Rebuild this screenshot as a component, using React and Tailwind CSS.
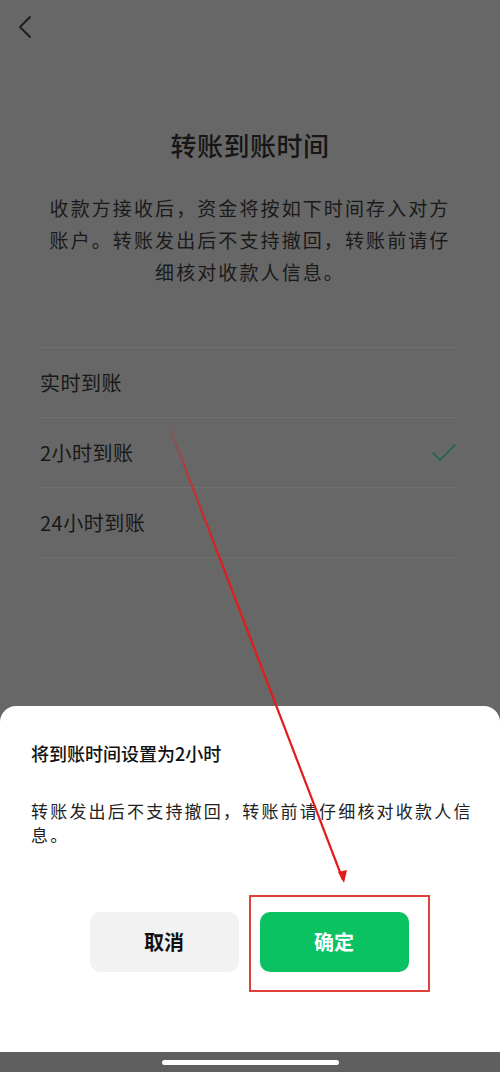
import React from "react";

const font = { fontFamily: '"Noto Sans CJK SC", "Noto Sans", sans-serif' };

const options = [
  { label: "实时到账", checked: false },
  { label: "2小时到账", checked: true },
  { label: "24小时到账", checked: false },
];

export default function App() {
  return (
    <div
      className="relative w-[500px] h-[1072px] overflow-hidden bg-[#676767] flex flex-col"
      style={font}
    >
      {/* dimmed page behind the sheet */}
      <div className="flex-1 flex flex-col">
        <div className="h-[40px] pt-[15px] pl-[17px]">
          <svg width="16" height="24" viewBox="0 0 16 24" fill="none">
            <path d="M13 2 L3 12 L13 22" stroke="#1c1c1c" strokeWidth="1.8" strokeLinecap="round" strokeLinejoin="round" />
          </svg>
        </div>

        <h1 className="mt-[88px] text-center text-[26px] leading-[34px] font-medium text-[#161616] tracking-[0.5px]">
          转账到账时间
        </h1>

        <p className="mt-[30px] text-center text-[19px] leading-[32px] tracking-[2.1px] text-[#1a1a1a] whitespace-nowrap">
          收款方接收后，资金将按如下时间存入对方
          <br />
          账户。转账发出后不支持撤回，转账前请仔
          <br />
          细核对收款人信息。
        </p>

        <div className="mt-[59px] ml-[40px] mr-[42px] border-t border-[#6f6f6f]">
          {options.map((o) => (
            <div
              key={o.label}
              className="h-[70px] flex items-center justify-between border-b border-[#6f6f6f]"
            >
              <span className="text-[20px] text-[#181818] tracking-[0.5px]">{o.label}</span>
              {o.checked && (
                <svg width="26" height="20" viewBox="0 0 26 20" fill="none" className="mr-[1px]">
                  <path d="M2 10 L9 17 L24 2" stroke="#2d6a4c" strokeWidth="2" strokeLinecap="round" strokeLinejoin="round" />
                </svg>
              )}
            </div>
          ))}
        </div>
      </div>

      {/* bottom sheet */}
      <div className="h-[346px] bg-white rounded-t-[16px] px-[31px] pt-[34px]">
        <h2 className="text-[18px] leading-[26px] font-medium text-[#111]">将到账时间设置为2小时</h2>
        <p className="mt-[33px] text-[17px] leading-[24px] tracking-[2.2px] text-[#222] whitespace-nowrap">
          转账发出后不支持撤回，转账前请仔细核对收款人信
          <br />
          息。
        </p>
        <div className="mt-[65px] flex justify-center gap-[21px] pr-[2px]">
          <button className="w-[149px] h-[60px] rounded-[10px] bg-[#f2f2f2] text-[20px] font-bold text-[#111]">
            取消
          </button>
          <button className="w-[149px] h-[60px] rounded-[10px] bg-[#0ac262] text-[20px] font-bold text-white">
            确定
          </button>
        </div>
      </div>

      {/* system bar */}
      <div className="h-[20px] bg-[#5f5f5f] flex justify-center pt-[8px]">
        <div className="w-[177px] h-[5px] rounded-full bg-white" />
      </div>

      {/* red annotation */}
      <div className="absolute left-[249px] top-[895px] w-[181px] h-[97px] border-2 border-solid border-[#e0413a]" />
      <svg className="absolute left-0 top-0 pointer-events-none" width="500" height="1072">
        <defs>
          <linearGradient id="fade" x1="166" y1="418" x2="344" y2="882" gradientUnits="userSpaceOnUse">
            <stop offset="0" stopColor="#e21b1b" stopOpacity="0" />
            <stop offset="0.12" stopColor="#e21b1b" stopOpacity="0.6" />
            <stop offset="0.3" stopColor="#e21b1b" stopOpacity="1" />
            <stop offset="1" stopColor="#e21b1b" stopOpacity="1" />
          </linearGradient>
        </defs>
        <line x1="166" y1="418" x2="343" y2="880" stroke="url(#fade)" strokeWidth="2.2" />
        <path d="M338 872 L344 883 L347 870 Z" fill="#e21b1b" />
      </svg>
    </div>
  );
}
